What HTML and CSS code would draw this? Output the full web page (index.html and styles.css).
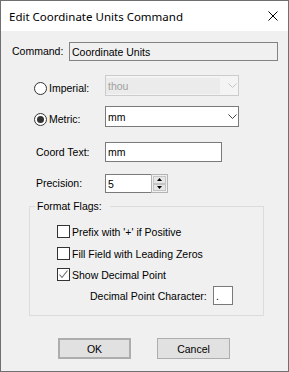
FILE: index.html
```html
<!DOCTYPE html>
<html lang="en">
<head>
    <meta charset="UTF-8">
    <title>Edit Coordinate Units Command</title>
    <link rel="stylesheet" href="styles.css">
</head>
<body>
<div class="dialog">
    <div class="titlebar">
        <span class="title">Edit Coordinate Units Command</span>
        <svg class="close" width="11" height="10" viewBox="0 0 11 10">
            <path d="M0.5 0.5 L9.5 9.5 M9.5 0.5 L0.5 9.5" stroke="#000" stroke-width="1" fill="none"/>
        </svg>
    </div>
    <div class="content">
        <div class="row row-command">
            <span class="label label-command">Command:</span>
            <div class="field readonly">Coordinate Units</div>
        </div>

        <div class="row row-unit row-imperial">
            <div class="radio-option"><span class="radio"></span>Imperial:</div>
            <div class="combo disabled">
                <span class="combo-text">thou</span>
                <svg class="chevron" width="9" height="5" viewBox="0 0 9 5">
                    <path d="M0.5 0.5 L4.5 4.5 L8.5 0.5" stroke="#c4c4c4" fill="none"/>
                </svg>
            </div>
        </div>

        <div class="row row-unit row-metric">
            <div class="radio-option"><span class="radio checked"></span>Metric:</div>
            <div class="combo">
                <span class="combo-text">mm</span>
                <svg class="chevron" width="9" height="5" viewBox="0 0 9 5">
                    <path d="M0.5 0.5 L4.5 4.5 L8.5 0.5" stroke="#404040" fill="none"/>
                </svg>
            </div>
        </div>

        <div class="row row-coord">
            <span class="label label-wide">Coord Text:</span>
            <div class="field coord-field">mm</div>
        </div>

        <div class="row row-precision">
            <span class="label label-wide">Precision:</span>
            <div class="field spin-field">5</div>
            <div class="spin">
                <div class="spin-btn">
                    <svg width="5" height="3" viewBox="0 0 5 3"><polygon points="2.5,0 5,3 0,3" fill="#000"/></svg>
                </div>
                <div class="spin-btn">
                    <svg width="5" height="3" viewBox="0 0 5 3"><polygon points="0,0 5,0 2.5,3" fill="#000"/></svg>
                </div>
            </div>
        </div>

        <div class="group">
            <span class="group-title">Format Flags:</span>
            <div class="check-row check-first"><span class="checkbox"></span>Prefix with '+' if Positive</div>
            <div class="check-row check-second"><span class="checkbox"></span>Fill Field with Leading Zeros</div>
            <div class="check-row check-third">
                <span class="checkbox">
                    <svg width="11" height="11" viewBox="0 0 11 11"><path d="M1.5 5.5 L4 8.5 L9.5 1.5" stroke="#6a6a6a" stroke-width="1.1" fill="none"/></svg>
                </span>Show Decimal Point
            </div>
            <div class="row dec-row">
                <span class="dec-label">Decimal Point Character:</span>
                <div class="field dec-field">.</div>
            </div>
        </div>

        <div class="row buttons">
            <button class="btn default">OK</button>
            <button class="btn">Cancel</button>
        </div>
    </div>
</div>
</body>
</html>
```

FILE: styles.css
```css
body {
    margin: 0;
    font-family: "Liberation Sans", Arial, sans-serif;
    font-size: 10.5px;
    color: #000;
    background: #fff;
}
.dialog {
    width: 289px;
    height: 372px;
    box-sizing: border-box;
    border: 1px solid #707070;
    background: #f0f0f0;
    display: flex;
    flex-direction: column;
}
.titlebar {
    flex: none;
    height: 30px;
    background: #fff;
    display: flex;
    align-items: center;
    padding-left: 8px;
}
.title {
    font-family: "Noto Sans", sans-serif;
    font-size: 11.5px;
}
.close {
    margin-left: auto;
    margin-right: 9px;
}
.content {
    display: flex;
    flex-direction: column;
    padding: 11px 10px 0 11px;
}
.row {
    display: flex;
    align-items: center;
    flex: none;
}
.label {
    line-height: 13px;
}
.field {
    box-sizing: border-box;
    height: 100%;
    border: 1px solid #7a7a7a;
    background: #fff;
    display: flex;
    align-items: center;
    padding-left: 2px;
}
.row-command {
    height: 19px;
}
.label-command {
    width: 57px;
}
.field.readonly {
    width: 209px;
    background: #f0f0f0;
    border-color: #838383;
}
.row-unit {
    height: 21px;
    margin-left: 22px;
    align-items: stretch;
}
.row-imperial {
    margin-top: 14px;
}
.row-metric {
    margin-top: 10px;
}
.radio-option {
    width: 71px;
    box-sizing: border-box;
    padding-top: 5px;
    display: flex;
    align-items: center;
}
.radio {
    width: 13px;
    height: 13px;
    box-sizing: border-box;
    border: 1px solid #333;
    border-radius: 50%;
    background: #fff;
    margin-right: 2px;
    display: flex;
    align-items: center;
    justify-content: center;
}
.radio.checked::after {
    content: "";
    width: 7px;
    height: 7px;
    border-radius: 50%;
    background: #333;
}
.combo {
    width: 134px;
    box-sizing: border-box;
    border: 1px solid #7a7a7a;
    background: #fff;
    display: flex;
    align-items: center;
}
.combo-text {
    padding-left: 2px;
}
.chevron {
    margin-left: auto;
    margin-right: 1px;
}
.combo.disabled {
    border-color: #cccccc;
    background: #f4f4f4;
    color: #a0a0a0;
}
.combo.disabled .combo-text {
    width: 114px;
    height: 16px;
    box-sizing: border-box;
    background: #ebebeb;
    display: flex;
    align-items: center;
}
.row-coord {
    height: 20px;
    margin-top: 15px;
    margin-left: 24px;
}
.label-wide {
    width: 69px;
}
.coord-field {
    width: 117px;
}
.row-precision {
    height: 19px;
    margin-top: 12px;
    margin-left: 24px;
}
.spin-field {
    width: 46px;
    border-right: none;
}
.spin {
    width: 17px;
    height: 19px;
    box-sizing: border-box;
    border: 1px solid #b4b4b4;
    background: #f0f0f0;
    padding: 1px;
    display: flex;
    flex-direction: column;
}
.spin-btn {
    flex: 1;
    border: 1px solid #c4c4c4;
    background: #e6e6e6;
    display: flex;
    align-items: center;
    justify-content: center;
}
.group {
    margin-top: 13px;
    margin-left: 17px;
    width: 235px;
    height: 110px;
    box-sizing: border-box;
    border: 1px solid #dcdcdc;
    display: flex;
    flex-direction: column;
    flex: none;
}
.group-title {
    align-self: flex-start;
    margin: -7px 0 0 5px;
    padding: 0 8px 0 2px;
    line-height: 13px;
    background: #f0f0f0;
}
.check-row {
    display: flex;
    align-items: center;
    height: 13px;
    margin-left: 27px;
}
.check-first {
    margin-top: 12px;
}
.check-second {
    margin-top: 9px;
}
.check-third {
    margin-top: 8px;
}
.checkbox {
    width: 13px;
    height: 13px;
    box-sizing: border-box;
    border: 1px solid #333;
    background: #fff;
    margin-right: 2px;
    display: flex;
    align-items: center;
    justify-content: center;
}
.dec-row {
    height: 19px;
    margin-top: 5px;
    margin-left: 60px;
}
.dec-label {
    width: 123px;
}
.dec-field {
    width: 20px;
    border-color: #7a7a7a;
}
.buttons {
    height: 21px;
    margin-top: 22px;
    margin-left: 46px;
    gap: 26px;
}
.btn {
    width: 73px;
    height: 21px;
    box-sizing: border-box;
    border: 1px solid #adadad;
    background: #e1e1e1;
    font: inherit;
    color: #000;
    padding: 0;
}
.btn.default {
    border-width: 2px;
}
```
